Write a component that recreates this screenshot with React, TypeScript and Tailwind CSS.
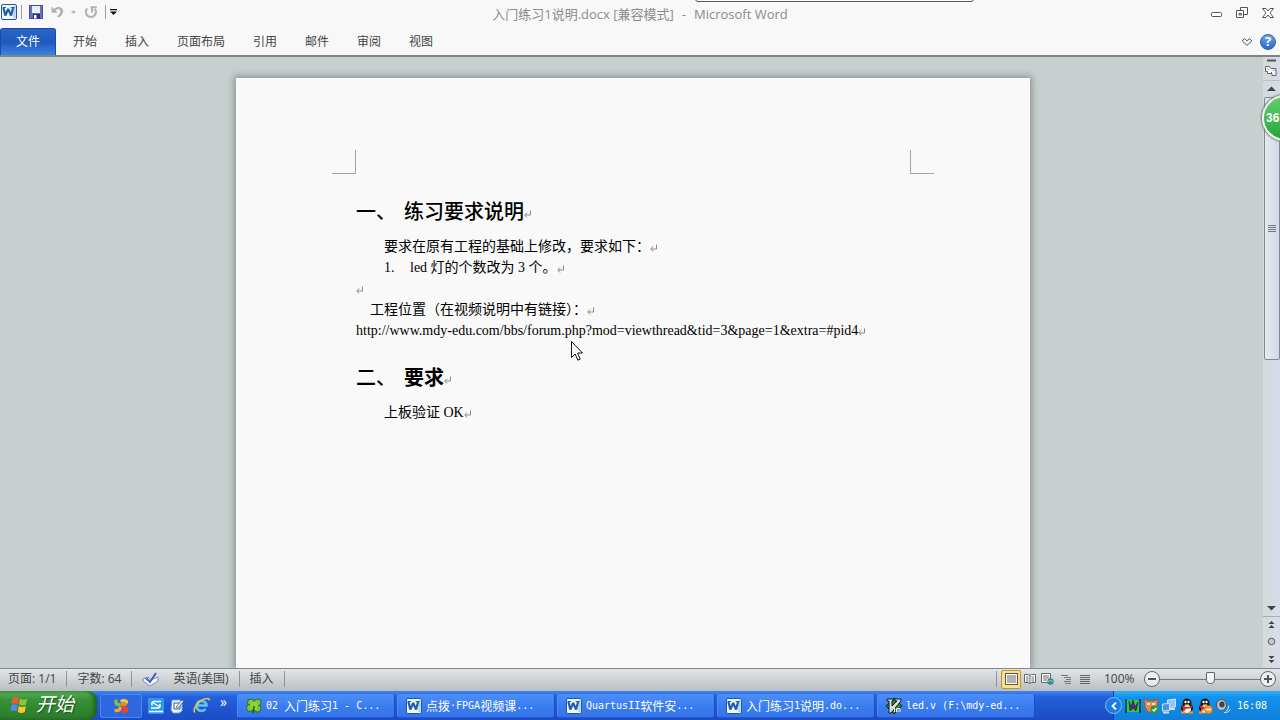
import type { ReactNode } from "react";

const UI = "font-['Open_Sans','Noto_Sans_CJK_SC',sans-serif]";

function WordIcon() {
  return (
    <svg width="16" height="16" viewBox="0 0 16 16" className="shrink-0">
      <rect x="0.5" y="0.5" width="15" height="15" rx="1.5" fill="#f2f8ff" stroke="#1f56a8" />
      <path d="M12.500 2h2v12h-2z" fill="#a9c9ec" />
      <path d="M2.500 4l1.800 7.500L7.200 5l2.900 6.500L12 4" fill="none" stroke="#1d5db3" strokeWidth="2.200" strokeLinejoin="bevel" />
      <path d="M1.500 3.500h3.500M9.800 3.500h3.700" stroke="#1d5db3" />
    </svg>
  );
}

function SaveIcon() {
  return (
    <svg width="14" height="14" viewBox="0 0 14 14">
      <path d="M0.500 0.500h13v13H0.500z" fill="#6a6cc4" stroke="#4a4da4" />
      <path d="M3 1h8v7H3z" fill="#e4eefb" />
      <path d="M4 9h7v4.500H4z" fill="#2c2f68" />
      <path d="M5 10h2.500v3.500H5z" fill="#fff" />
    </svg>
  );
}

function UndoIcon() {
  return (
    <svg width="14" height="14" viewBox="0 0 14 14">
      <path d="M0.500 1.500v6.200h6.200L4.600 5.600C6.500 3.600 9 3.800 9.200 6c.1 2-1 3.500-3 5.500l2 1c3-2.200 4.300-4.600 4-7C11.700 1.500 6.500.6 3 3.900z" fill="#b0b2b5" />
    </svg>
  );
}

function RedoIcon() {
  return (
    <svg width="14" height="14" viewBox="0 0 14 14">
      <path d="M3.300 3.500a5 5 0 1 0 7.500.3" fill="none" stroke="#b0b2b5" strokeWidth="2.200" />
      <path d="M6.500 1.200h6.200v1.800H9.200v4.500H7.200z" fill="#b0b2b5" />
    </svg>
  );
}

function Mark() {
  return (
    <svg width="8" height="8" viewBox="0 0 8 8" fill="none" stroke="#8a8a8a" className="inline-block align-middle">
      <path d="M6.500 0.500v4.500H1M3 2.500L0.800 5L3 7.500" />
    </svg>
  );
}

function Task({ icon, children }: { icon: ReactNode; children: ReactNode }) {
  return (
    <button className="flex h-6 w-[158px] min-w-0 shrink items-center gap-1 overflow-hidden rounded-[3px] border border-[#4a8cf8] border-r-[#1d4fc0] border-b-[#2457c8] bg-linear-to-b from-[#4b8df8] via-[#3a7df0] to-[#3474ea] pl-2 whitespace-pre text-white">
      {icon}
      <span className="flex items-center font-['DejaVu_Sans_Mono','Noto_Sans_CJK_SC',monospace] text-[10px]">{children}</span>
    </button>
  );
}

function Han({ children }: { children: ReactNode }) {
  return <span className="font-['Noto_Sans_CJK_SC',sans-serif] text-xs">{children}</span>;
}

function Penguin({ busy = false }: { busy?: boolean }) {
  return (
    <svg width="16" height="16" viewBox="0 0 16 16">
      <ellipse cx="8" cy="10" rx="6" ry="5" fill="#1a1a1a" />
      <circle cx="8" cy="5" r="4.500" fill="#1a1a1a" />
      <ellipse cx="8" cy="11" rx="4" ry="4" fill="#fff" />
      <circle cx="6.500" cy="4" r="1.200" fill="#fff" />
      <circle cx="9.500" cy="4" r="1.200" fill="#fff" />
      <path d="M5.500 6.200h5L8 7.700z" fill="#f6a21a" />
      <path d="M3 7.500q5 3 10 0v2q-5 2.500-10 0z" fill="#e0241b" />
      <path d="M4 8.500h2.500v4H4z" fill="#e0241b" />
      <path d="M2 14.500h5M9 14.500h5" stroke="#f6a21a" strokeWidth="2" />
      {busy && (
        <>
          <circle cx="11.500" cy="11.500" r="4" fill="#f39a2d" stroke="#c46a12" strokeWidth="0.600" />
          <path d="M9.200 11.500h4.600" stroke="#fff" strokeWidth="1.600" />
        </>
      )}
    </svg>
  );
}

function TitleBar() {
  return (
    <header className="grid h-7 shrink-0 grid-cols-[1fr_auto_1fr] items-center bg-[#f8f8f8]">
      <div className="flex items-center pb-1 pl-px">
        <WordIcon />
        <span className="ml-1 h-3.5 w-px bg-[#9aa0a4]" />
        <button aria-label="保存" className="ml-[7px]"><SaveIcon /></button>
        <button aria-label="撤消" className="ml-2"><UndoIcon /></button>
        <button aria-label="撤消列表" className="ml-1.5">
          <svg width="5" height="3" viewBox="0 0 5 3"><path d="M0 0h5L2.500 3z" fill="#b0b2b5" /></svg>
        </button>
        <button aria-label="重复" className="ml-2"><RedoIcon /></button>
        <span className="ml-[7px] h-3.5 w-px bg-[#9aa0a4]" />
        <button aria-label="自定义快速访问工具栏" className="ml-1">
          <svg width="7" height="6" viewBox="0 0 7 6"><path d="M0 0h7v1.300H0zM0 2.500h7L3.500 6z" fill="#111" /></svg>
        </button>
      </div>
      <h1 className="flex gap-2 pt-0.5 text-[13px] whitespace-nowrap text-[#8b8b8b]">
        <span>入门练习1说明.docx [兼容模式]</span>
        <span>-</span>
        <span>Microsoft Word</span>
      </h1>
      <div className="flex items-center justify-end gap-3.5 pr-1.5 pb-0.5">
        <button aria-label="最小化" className="pt-1">
          <svg width="11" height="6" viewBox="0 0 11 6"><rect x="0.500" y="0.500" width="10" height="4" rx="1" fill="#fff" stroke="#555" /></svg>
        </button>
        <button aria-label="还原">
          <svg width="12" height="12" viewBox="0 0 12 12" fill="#fff" stroke="#555">
            <path d="M4.500 0.500h7v7h-7z" /><path d="M0.500 3.500h7v7h-7z" /><path d="M3 6.500h2.500v1.500H3z" />
          </svg>
        </button>
        <button aria-label="关闭">
          <svg width="12" height="11" viewBox="0 0 12 11">
            <path d="M0.500 0.500H4L6 3 8 0.500h3.500L8 5l3.500 4.500H8L6 7 4 9.500H0.500L4 5z" fill="#fff" stroke="#555" />
          </svg>
        </button>
      </div>
    </header>
  );
}

function Ribbon() {
  const tabs = ["开始", "插入", "页面布局", "引用", "邮件", "审阅", "视图"];
  return (
    <nav className="flex h-[29px] shrink-0 items-stretch border-b-2 border-[#7e8486] bg-[#f8f8f8] text-xs text-[#444]">
      <button className="w-14 rounded-t-[3px] border border-b-0 border-[#1c4ba6] bg-linear-to-b from-[#2a66c6] via-[#2059bd] to-[#3b82e2] text-white">文件</button>
      <div className="ml-[3px] flex">
        {tabs.map((t) => (
          <button key={t} className="px-3.5">{t}</button>
        ))}
      </div>
      <div className="ml-auto flex items-center gap-2 pr-1">
        <button aria-label="功能区最小化">
          <svg width="10" height="8" viewBox="0 0 10 8"><path d="M0.700 2L2.500 0.700 5 2.800 7.500 0.700 9.300 2v1.500L5 7.300 0.700 3.500z" fill="#fff" stroke="#555" /></svg>
        </button>
        <button aria-label="帮助" className="flex size-4 items-center justify-center rounded-full border border-[#2c5fae] bg-linear-to-b from-[#6fa3e8] to-[#2d68c4] text-[13px] leading-none font-bold text-white">?</button>
      </div>
    </nav>
  );
}

function ScrollBar() {
  return (
    <aside className="flex w-[17px] shrink-0 flex-col items-center bg-linear-to-r from-[#d3dadd] to-[#d9dce8]">
      <svg width="17" height="40" viewBox="0 0 17 40" className="shrink-0">
        <path d="M4 3.500h9" stroke="#555" strokeWidth="2" />
        <path d="M2.500 9.500h4l1.500 2h5v7H9v-2H4.500v-2h-2z" fill="#f5f6fa" stroke="#666" />
        <path d="M4.500 11.500l1 1M8 15l1 1M10.500 13l1 1" stroke="#666" />
        <path d="M0 23.500h17" stroke="#b8bdc6" />
        <path d="M4 34h9L8.500 29.500z" fill="#444" />
      </svg>
      <div className="flex h-[263px] w-4 flex-col items-center justify-center rounded-[2px] border border-[#83878f] bg-linear-to-r from-[#e6eaf0] to-[#d3d8e8]">
        <svg width="8" height="8" viewBox="0 0 8 8"><path d="M0 .5h8M0 2.500h8M0 4.500h8M0 6.500h8" stroke="#777" /></svg>
      </div>
      <svg width="17" height="68" viewBox="0 0 17 68" className="mt-auto shrink-0">
        <path d="M4 6h9L8.500 10.500z" fill="#444" />
        <path d="M0 16.500h17" stroke="#a9aeb8" />
        <path d="M5.500 24h6L8.500 21zM5.500 28h6L8.500 25z" fill="#444" />
        <circle cx="8.500" cy="41.500" r="3.200" fill="#c8cbd2" stroke="#555" />
        <path d="M5.500 56h6L8.500 59zM5.500 60h6L8.500 63z" fill="#444" />
      </svg>
    </aside>
  );
}

function Page() {
  return (
    <article className="w-[794px] bg-[#f9f9f9] font-['Liberation_Serif','Noto_Sans_CJK_SC',serif] text-sm leading-[21px] text-black shadow-[0_0_7px_2px_#8b9092]">
      <div className="flex h-24 items-end justify-between px-24">
        <span className="size-6 border-r border-b border-[#a6a6a6]" />
        <span className="size-6 border-b border-l border-[#a6a6a6]" />
      </div>
      <div className="px-[120px] pt-px">
        <h2 className="mt-[19px] mb-1.5 flex text-xl leading-9 font-medium">
          <span className="w-12">一、</span>
          <span>练习要求说明<Mark /></span>
        </h2>
        <p className="pl-7">要求在原有工程的基础上修改，要求如下：<Mark /></p>
        <ol>
          <li className="flex pl-7"><span className="w-[26px]">1.</span><span>led 灯的个数改为 3 个。<Mark /></span></li>
        </ol>
        <p><Mark /></p>
        <p className="pl-3.5">工程位置（在视频说明中有链接）：<Mark /></p>
        <p className="whitespace-nowrap">http://www.mdy-edu.com/bbs/forum.php?mod=viewthread&amp;tid=3&amp;page=1&amp;extra=#pid4<Mark /></p>
        <h2 className="mt-[19px] mb-1.5 flex text-xl leading-9 font-bold">
          <span className="w-12 font-medium">二、</span>
          <span>要求<Mark /></span>
        </h2>
        <p className="pl-7">上板验证 OK<Mark /></p>
      </div>
    </article>
  );
}

function StatusBar() {
  const sep = <span className="h-4 w-px bg-[#8f959a]" />;
  return (
    <footer className="flex h-[23px] shrink-0 items-center justify-between border-t border-[#7f888e] bg-linear-to-b from-[#e3e6e8] to-[#b9bec2] text-xs text-[#444]">
      <div className="flex items-center gap-2.5 pb-0.5 pl-2">
        <span>页面: 1/1</span>
        {sep}
        <span>字数: 64</span>
        {sep}
        <button aria-label="校对">
          <svg width="17" height="15" viewBox="0 0 17 15">
            <path d="M1 7l5-2 3 3 7-3v4l-8 5-7-5z" fill="#f3f6fc" stroke="#7d8db5" />
            <path d="M4 6l4 4 6-9" fill="none" stroke="#3f63b5" strokeWidth="2" />
          </svg>
        </button>
        <button className="pl-1">英语(美国)</button>
        {sep}
        <button>插入</button>
        {sep}
      </div>
      <div className="flex items-center pr-1 pb-0.5">
        {sep}
        <button aria-label="页面视图" className="ml-1 flex h-[19px] w-5 items-center justify-center rounded-[2px] border border-[#c0962c] bg-[#fbe08a]">
          <svg width="13" height="12" viewBox="0 0 13 12"><rect x="0.500" y="0.500" width="12" height="11" fill="#fff" stroke="#555" /><path d="M2 3h9M2 5h9M2 7h9M2 9h9" stroke="#666" /></svg>
        </button>
        <button aria-label="阅读版式视图" className="ml-[3px]">
          <svg width="12" height="12" viewBox="0 0 12 12" fill="#fff" stroke="#666"><path d="M0.500 1.500h4l1.500 1 1.500-1h4v8h-4l-1.500 1-1.500-1h-4zM6 2v9M2 4h2.500M2 6h2.500M2 8h2.500M7.500 4H10M7.500 6H10M7.500 8H10" /></svg>
        </button>
        <button aria-label="Web 版式视图" className="ml-[5px]">
          <svg width="13" height="12" viewBox="0 0 13 12"><path d="M0.500 0.500h9v9h-9zM2 3h6M2 5h6M2 7h4" fill="#fff" stroke="#666" /><circle cx="9.500" cy="8.500" r="3.200" fill="#348a90" /><path d="M7 8.500q2.500-2 5 0" stroke="#8fd0b5" fill="none" /></svg>
        </button>
        <button aria-label="大纲视图" className="ml-[7px]">
          <svg width="11" height="11" viewBox="0 0 11 11" stroke="#777"><path d="M0 1.500h7M3 3.500h7M5 5.500h5M3 7.500h7M4 9.500h6" /></svg>
        </button>
        <button aria-label="草稿" className="ml-2">
          <svg width="10" height="11" viewBox="0 0 10 11" stroke="#666"><path d="M0 1.500h10M0 3.500h10M0 5.500h10M0 7.500h10M0 9.500h10" /></svg>
        </button>
        <span className="ml-3.5 w-10">100%</span>
        <button aria-label="缩小" className="flex size-4 items-center justify-center rounded-full border border-[#666] bg-[#eceef0]">
          <span className="h-0.5 w-2 bg-[#555]" />
        </button>
        <input
          type="range"
          aria-label="显示比例"
          min={0}
          max={100}
          defaultValue={50}
          className="h-4 w-[100px] appearance-none bg-transparent [&::-webkit-slider-runnable-track]:h-px [&::-webkit-slider-runnable-track]:bg-[#777] [&::-webkit-slider-thumb]:-mt-[7px] [&::-webkit-slider-thumb]:h-3 [&::-webkit-slider-thumb]:w-[9px] [&::-webkit-slider-thumb]:appearance-none [&::-webkit-slider-thumb]:rounded-t-[1px] [&::-webkit-slider-thumb]:rounded-b-[4px] [&::-webkit-slider-thumb]:border [&::-webkit-slider-thumb]:border-[#666] [&::-webkit-slider-thumb]:bg-[#f3f4f5]"
        />
        <button aria-label="放大" className="flex size-4 items-center justify-center rounded-full border border-[#666] bg-[#eceef0]">
          <svg width="8" height="8" viewBox="0 0 8 8"><path d="M4 0v8M0 4h8" stroke="#555" strokeWidth="2" /></svg>
        </button>
      </div>
    </footer>
  );
}

function TaskBar() {
  return (
    <div className="flex h-[29px] shrink-0 items-center bg-linear-to-b from-[#3f86f2] via-[#2560dc] via-20% to-[#1c4bc4] text-xs">
      <button className="flex h-full w-[97px] shrink-0 items-center gap-2 rounded-r-[9px] bg-linear-to-b from-[#5bb45a] via-[#389238] via-30% to-[#2b7a2c] pb-0.5 pl-2.5 text-[19px] leading-none text-white italic shadow-[inset_-3px_0_4px_#1d611f]">
        <svg width="18" height="18" viewBox="0 0 18 18" className="shrink-0">
          <path d="M2.500 2q3-1.800 6.500 0L8 8.200Q4.500 6.500 1.500 8z" fill="#ee5a2a" />
          <path d="M10 2.800q3.500 1.800 7 0l-1 5.700q-3.500 2-7 0z" fill="#8bc53f" />
          <path d="M1.300 9.200q3-1.700 6.500 0l-1 6q-3.300-1.500-6.300 0z" fill="#4b8cf0" />
          <path d="M8.800 10q3.500 2 7 0l-1 6q-3.500 2-7 0z" fill="#fbc62c" />
        </svg>
        <span className="[text-shadow:1px_1px_1px_#1a4c1a]">开始</span>
      </button>
      <div className="flex shrink-0 items-center">
        <button aria-label="输入法" className="ml-[3px] flex h-6 w-[42px] items-center justify-center rounded-[2px] border border-[#4a86f0] bg-[#2e68de]">
          <svg width="16" height="16" viewBox="0 0 16 16" fill="none" strokeWidth="3.400" strokeLinecap="round">
            <path d="M3 3v1.500Q3 6.500 6 6.500" stroke="#7fc242" />
            <path d="M9 3q4-1 4.500 1" stroke="#f5c431" />
            <path d="M9 6.500h3" stroke="#e88a2a" />
            <path d="M3 12.500q4 .5 4-2.500" stroke="#f5a623" />
            <path d="M10.500 9.500q3.500 0 3 3-1 1.500-3 .5" stroke="#e5452f" />
          </svg>
        </button>
        <button aria-label="网络盘" className="ml-1.5">
          <svg width="16" height="16" viewBox="0 0 16 16"><rect width="16" height="16" fill="#2b9be5" /><path d="M1 13.500h14" stroke="#fff" strokeWidth="1.500" /><path d="M13 3.500H6a2.300 2.300 0 0 0-1.500 4M3 10h7a2.300 2.300 0 0 0 1.500-4M5 5l6.500 3.500" fill="none" stroke="#fff" strokeWidth="1.400" /></svg>
        </button>
        <button aria-label="显示桌面" className="ml-1.5">
          <svg width="15" height="16" viewBox="0 0 15 16"><path d="M2 2h8l2 2v9l-3 2H3L1 12z" fill="#eef6ff" stroke="#5ba6e8" /><path d="M4 5h6v6H4z" fill="#fff" stroke="#2a5da8" /><path d="M6 9l6-7 2 1-6 7z" fill="#f3f3f3" stroke="#345" strokeWidth="0.700" /></svg>
        </button>
        <button aria-label="Internet Explorer" className="ml-2">
          <svg width="17" height="17" viewBox="0 0 17 17" fill="none"><path d="M12.500 12A5 5 0 1 1 13.500 8.500H5" stroke="#5fc3f5" strokeWidth="2.600" /><path d="M2 15.500C-1 13 6 1.500 15 1.500q1.500 0 1 2" stroke="#f3c541" strokeWidth="1.500" /></svg>
        </button>
        <span className="ml-2.5 w-[17px] self-start text-[14px] leading-4 text-white">»</span>
      </div>
      <div className="flex min-w-0 items-center gap-0.5">
        <Task
          icon={
            <svg width="16" height="16" viewBox="0 0 16 16" className="shrink-0">
              <g fill="#7cc735" stroke="#2c5d12" strokeWidth="0.800"><circle cx="5" cy="4.500" r="3.500" /><circle cx="11.500" cy="4.500" r="3.500" /><circle cx="4" cy="10" r="3.500" /><circle cx="11.500" cy="10.500" r="3.500" /></g>
              <circle cx="8" cy="7.500" r="4" fill="#8ed441" /><path d="M8 8l-1 7.500" stroke="#2c5d12" strokeWidth="1.500" />
            </svg>
          }
        >
          02 <Han>入门练习</Han>1 - C...
        </Task>
        <Task icon={<WordIcon />}><Han>点拨</Han>·FPGA<Han>视频课</Han>...</Task>
        <Task icon={<WordIcon />}>QuartusII<Han>软件安</Han>...</Task>
        <Task icon={<WordIcon />}><Han>入门练习</Han>1<Han>说明</Han>.do...</Task>
        <Task
          icon={
            <svg width="16" height="16" viewBox="0 0 16 16" className="shrink-0">
              <path d="M8 0l8 8-8 8-8-8z" fill="#1f8a3c" stroke="#0b2a12" />
              <path d="M1 1h6v2H6v5l5-5H9V1h6v2L5 15H3V3H1z" fill="#d9d9d9" stroke="#111" strokeWidth="0.900" />
              <path d="M8.500 10v4M10.500 14v-3.500h1.500v3.500M12 10.500h2V14" fill="none" stroke="#eee" />
            </svg>
          }
        >
          {"led.v (F:\\mdy-ed..."}
        </Task>
      </div>
      <div className="relative ml-auto flex h-full w-[167px] shrink-0 items-center gap-0.5 border-l border-[#0d3fa5] bg-linear-to-b from-[#2fb0f8] via-[#1592ec] via-20% to-[#0f7fda] pl-[11px] text-white">
        <button aria-label="显示隐藏的图标" className="absolute top-1.5 -left-[9px] flex size-[17px] items-center justify-center rounded-full border border-[#7fc0f5] bg-[#1e7be0]">
          <svg width="6" height="8" viewBox="0 0 6 8"><path d="M5 0.500L1.500 4 5 7.500" fill="none" stroke="#fff" strokeWidth="1.800" /></svg>
        </button>
        <svg width="16" height="14" viewBox="0 0 16 14"><path d="M2 1h12v12H2z" fill="#27d04b" /><path d="M0 1h2M0 13h2M14 1h2M14 13h2M1 1v12M15 1v12" stroke="#111" /><path d="M4 2l2 6 2-7 2 7 3-5-2 9-3-3-3 3z" fill="#6c1b98" stroke="#221" strokeWidth="0.600" /></svg>
        <svg width="16" height="16" viewBox="0 0 16 16"><path d="M1 1l4 2h6l4-2-1 8-3 5H5L2 9z" fill="#e58a4a" stroke="#9a4c1d" strokeWidth="0.700" /><path d="M4 6h3M9 6h3" stroke="#fff" strokeWidth="1.500" /><circle cx="11.500" cy="11.500" r="4" fill="#2b9a3f" /><path d="M9.500 11.500l1.500 1.500 2.500-3" stroke="#fff" fill="none" strokeWidth="1.300" /></svg>
        <svg width="16" height="16" viewBox="0 0 16 16" fill="#8cc8fa" stroke="#cfe3f8"><path d="M6.500 2l8-1v8l-8 .5z" /><path d="M9 11h5" strokeWidth="2" /><path d="M1.500 6l7-.5v7l-7 .5z" fill="#4b92e0" /><path d="M2 14.500h6" strokeWidth="2" /></svg>
        <Penguin />
        <Penguin busy />
        <svg width="16" height="16" viewBox="0 0 16 16"><ellipse cx="6.500" cy="7" rx="5" ry="5.500" fill="#b9bfc6" stroke="#4a5058" /><ellipse cx="7" cy="6.500" rx="2.600" ry="3" fill="#3d434a" /><path d="M11.500 13q2.500-2 2-5.500M9 14.500q5 .5 6.500-3" fill="none" stroke="#cfe6fb" /></svg>
        <time className="ml-1 font-['DejaVu_Sans_Mono',monospace] text-[10px]">16:08</time>
      </div>
    </div>
  );
}

export default function App() {
  return (
    <div lang="zh-CN" className={`relative flex h-screen flex-col overflow-hidden bg-[#c8d0cf] ${UI}`}>
      <TitleBar />
      <Ribbon />
      <main className="flex min-h-0 flex-1">
        <div className="flex min-w-0 flex-1 justify-center overflow-hidden pt-[21px] pl-[3px]">
          <Page />
        </div>
        <ScrollBar />
      </main>
      <StatusBar />
      <TaskBar />
      <span className="absolute -top-1 left-[695px] h-1.5 w-[279px] rounded-b-[3px] border border-[#4d5858] bg-white" />
      <div className="absolute top-[95px] -right-[28px] flex size-[46px] items-center rounded-full border-2 border-[#e9f2ea] bg-linear-to-b from-[#5fd06c] to-[#23a53c] pl-0.5 font-['Liberation_Sans',sans-serif] text-xs font-bold text-white shadow-[0_0_2px_1px_#6d7a70]">36</div>
      <svg width="13" height="21" viewBox="0 0 13 21" className="absolute top-[341px] left-[571px]">
        <path d="M0.500 0.500v16l3.700-3.500 2.600 6.200 2.400-1-2.600-6.200h4.900z" fill="#fff" stroke="#111" />
      </svg>
    </div>
  );
}
